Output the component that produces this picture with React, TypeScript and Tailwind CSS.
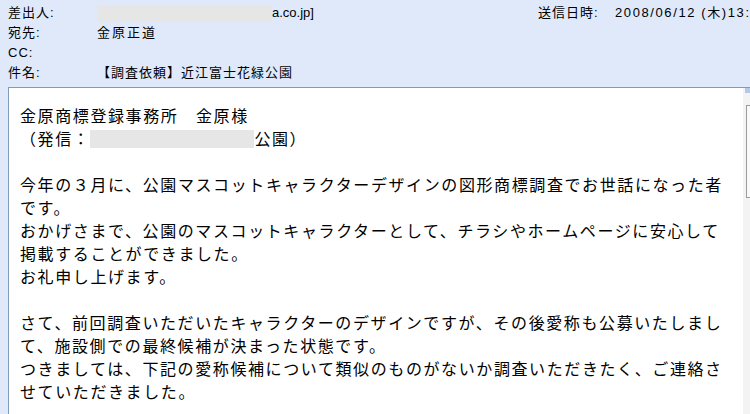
import React from "react"

const headerFont = { fontFamily: '"Liberation Sans", "Noto Sans CJK JP", sans-serif' }
const bodyFont = { fontFamily: '"Noto Sans CJK JP", "Liberation Sans", sans-serif' }

function HeaderRow({ label, children }: { label: string; children?: React.ReactNode }) {
  return (
    <div className="flex h-5 items-center">
      <div className="w-[89px] shrink-0 tracking-[1px]">{label}</div>
      <div className="flex items-center whitespace-nowrap">{children}</div>
    </div>
  )
}

function Redacted({ w, h }: { w: string; h: string }) {
  return <span className={`inline-block bg-[#e6e6e6] ${w} ${h}`} />
}

const lines: React.ReactNode[] = [
  "金原商標登録事務所　金原様",
  <>
    （発信：
    <span className="inline-block h-[18px] w-[164px] translate-y-[3px] bg-[#e6e6e6]" />
    公園）
  </>,
  "",
  "今年の３月に、公園マスコットキャラクターデザインの図形商標調査でお世話になった者",
  "です。",
  "おかげさまで、公園のマスコットキャラクターとして、チラシやホームページに安心して",
  "掲載することができました。",
  "お礼申し上げます。",
  "",
  "さて、前回調査いただいたキャラクターのデザインですが、その後愛称も公募いたしまし",
  "て、施設側での最終候補が決まった状態です。",
  "つきましては、下記の愛称候補について類似のものがないか調査いただきたく、ご連絡さ",
  "せていただきました。",
]

export default function App() {
  return (
    <div className="flex h-[414px] w-[750px] flex-col overflow-hidden bg-[#dfe9f9] text-black">
      <div className="relative flex flex-col pl-2 pt-[3px] text-[13px]" style={headerFont}>
        <HeaderRow label="差出人:">
          <Redacted w="w-[175px]" h="h-[17px]" />
          <span>a.co.jp]</span>
        </HeaderRow>
        <HeaderRow label="宛先:">
          <span className="tracking-[2px]">金原正道</span>
        </HeaderRow>
        <HeaderRow label="CC:" />
        <HeaderRow label="件名:">
          <span className="tracking-[1px]">【調査依頼】近江富士花緑公園</span>
        </HeaderRow>
        {/* date column runs past the window edge, as in the original */}
        <div className="absolute left-[538px] top-[3px] flex h-5 items-center whitespace-nowrap">
          <span className="w-[77px] tracking-[1px]">送信日時:</span>
          <span className="tracking-[1.6px]">2008/06/12 (木)13:55</span>
        </div>
      </div>
      <div className="ml-2 mt-1 flex min-h-0 flex-1 border-l border-t border-[#7f9db9] bg-white">
        <div
          className="min-w-0 flex-1 overflow-hidden pl-[11px] pt-[16px] text-[16px] leading-[23px] tracking-[1.6px]"
          style={bodyFont}
        >
          {lines.map((line, i) => (
            <div key={i} className="h-[23px] whitespace-nowrap">
              {line}
            </div>
          ))}
        </div>
        <div className="flex w-[7px] shrink-0 flex-col bg-[#f3f3f3]">
          <div className="ml-[2px] h-[5px] bg-[#b3c8ea]" />
          <div className="ml-[3px] mt-[12px] h-[93px] border-l border-t border-b border-[#9c9c9c] bg-[#f9f9f9]" />
        </div>
      </div>
    </div>
  )
}
